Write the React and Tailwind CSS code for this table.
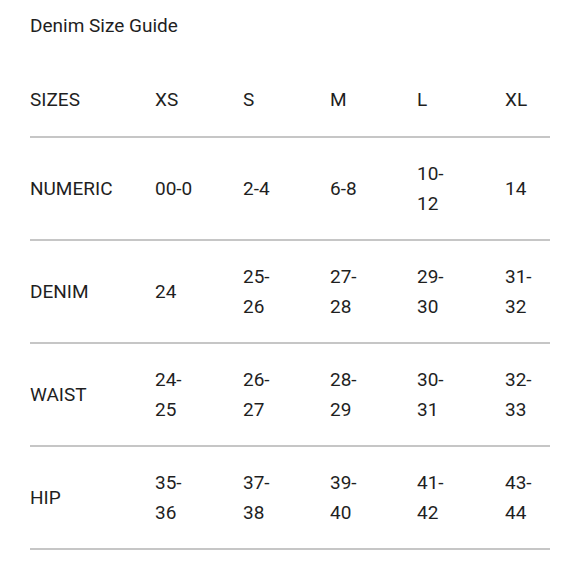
const SIZES = ['XS', 'S', 'M', 'L', 'XL'];

const ROWS = [
  { label: 'NUMERIC', values: ['00-0', '2-4', '6-8', '10-12', '14'] },
  { label: 'DENIM', values: ['24', '25-26', '27-28', '29-30', '31-32'] },
  { label: 'WAIST', values: ['24-25', '26-27', '28-29', '30-31', '32-33'] },
  { label: 'HIP', values: ['35-36', '37-38', '39-40', '41-42', '43-44'] },
];

const gridCols = 'grid grid-cols-[125px_88px_87px_87px_88px_1fr] items-center';

export default function App() {
  return (
    <div className="min-h-[580px] bg-white px-[30px] text-[#1f1f1f] text-[19px] leading-[30px]" style={{ fontFamily: 'Roboto, "Noto Sans", sans-serif' }}>
      <h1 className="pt-[11px] mb-[22px] text-[19px] font-normal">Denim Size Guide</h1>

      {/* Header row */}
      <div className={`${gridCols} h-[75px] border-b-2 border-[#c6c6c6]`}>
        <div>SIZES</div>
        {SIZES.map((s) => (
          <div key={s}>{s}</div>
        ))}
      </div>

      {ROWS.map((row) => (
        <div key={row.label} className={`${gridCols} h-[103px] border-b-2 border-[#c6c6c6]`}>
          <div>{row.label}</div>
          {row.values.map((v, i) => (
            <div key={i} className="w-[40px]">{v}</div>
          ))}
        </div>
      ))}
    </div>
  );
}
